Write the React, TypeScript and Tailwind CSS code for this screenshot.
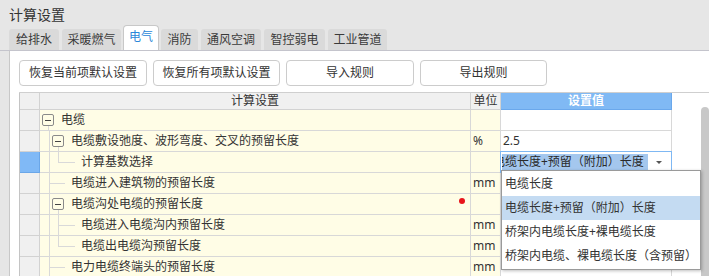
import React from "react";

type Row = {
  text: string;
  indent: number; // text offset from cell start
  unit?: string;
  value?: string;
  box?: number; // left of expander box
  lines: { l: number; t: number; w?: number; h?: number; b?: boolean }[];
  selected?: boolean;
  combo?: boolean;
  dot?: boolean;
};

const V = (l: number) => ({ l, t: 0, h: 21 });
const Vtop = (l: number) => ({ l, t: 0, h: 10 });
const Vbot = (l: number) => ({ l, t: 16, h: 5 });
const H = (l: number, w: number) => ({ l, t: 10, w });

const rows: Row[] = [
  { text: "电缆", indent: 21, box: 2, lines: [Vbot(8)] },
  {
    text: "电缆敷设弛度、波形弯度、交叉的预留长度",
    indent: 31,
    box: 12,
    unit: "%",
    value: "2.5",
    lines: [V(9), Vbot(18)],
  },
  {
    text: "计算基数选择",
    indent: 41,
    selected: true,
    combo: true,
    lines: [V(9), Vtop(18), H(18, 17)],
  },
  { text: "电缆进入建筑物的预留长度", indent: 31, unit: "mm", lines: [V(9), H(9, 16)] },
  { text: "电缆沟处电缆的预留长度", indent: 31, box: 12, dot: true, lines: [V(9), Vbot(18)] },
  { text: "电缆进入电缆沟内预留长度", indent: 41, unit: "mm", lines: [V(9), V(18), H(18, 17)] },
  { text: "电缆出电缆沟预留长度", indent: 41, unit: "mm", lines: [V(9), Vtop(18), H(18, 17)] },
  { text: "电力电缆终端头的预留长度", indent: 31, unit: "mm", lines: [V(9), H(9, 16)] },
];

const tabs = [
  { t: "给排水", w: 50 },
  { t: "采暖燃气", w: 59 },
  { t: "电气", w: 34, active: true },
  { t: "消防", w: 37 },
  { t: "通风空调", w: 60 },
  { t: "智控弱电", w: 61 },
  { t: "工业管道", w: 59 },
];

const buttons = [
  { t: "恢复当前项默认设置", w: 128 },
  { t: "恢复所有项默认设置", w: 127 },
  { t: "导入规则", w: 128 },
  { t: "导出规则", w: 127 },
];

const options = [
  "电缆长度",
  "电缆长度+预留（附加）长度",
  "桥架内电缆长度+裸电缆长度",
  "桥架内电缆、裸电缆长度（含预留）",
];

export default function App() {
  return (
    <div className="relative w-[709px] h-[276px] overflow-hidden bg-[#e6e6e6] text-[12px] text-[#333] font-['Noto_Sans','Noto_Sans_CJK_SC',sans-serif] flex flex-col">
      <div className="h-[28px] shrink-0 pl-[9px] pt-[6px] text-[14px] leading-[18px] text-[#333]">
        计算设置
      </div>
      <div className="h-[23px] shrink-0 flex items-end gap-[3px] pl-[9px] border-b border-[#c4c4cc]">
        {tabs.map((tab) =>
          tab.active ? (
            <div
              key={tab.t}
              style={{ width: tab.w + 2 }}
              className="h-[25px] -mx-[1px] bg-white border border-b-0 border-[#c8c8c8] rounded-t-[4px] flex items-center justify-center pb-[2px] text-[#2b87d9]"
            >
              {tab.t}
            </div>
          ) : (
            <div
              key={tab.t}
              style={{ width: tab.w }}
              className="h-[21px] bg-[#dadada] rounded-t-[3px] flex items-center justify-center text-[#3a3a3a]"
            >
              {tab.t}
            </div>
          )
        )}
      </div>
      <div className="flex-1 ml-[9px] bg-white border-l border-[#c8c8c8] pl-[9px] flex flex-col">
        <div className="mt-[9px] flex gap-[6px] shrink-0">
          {buttons.map((b) => (
            <div
              key={b.t}
              style={{ width: b.w }}
              className="h-[26px] border border-[#cccccc] rounded-[4px] bg-white flex items-center justify-center text-[#333]"
            >
              {b.t}
            </div>
          ))}
        </div>
        <div className="mt-[6px] flex border-t border-[#cfcfcf] flex-1">
          <div className="w-[653px] shrink-0 border-l border-[#c4c4c4]">
            {/* header */}
            <div className="flex h-[17px]">
              <div className="w-[20px] bg-[#f0f0f0] border-r border-b border-[#d2d2d2]" />
              <div className="w-[431px] bg-[#f0f0f0] border-r border-b border-[#d2d2d2] flex items-center justify-center text-[#333]">
                计算设置
              </div>
              <div className="w-[30px] bg-[#f0f0f0] border-r border-b border-[#d2d2d2] flex items-center justify-center text-[#333]">
                单位
              </div>
              <div className="w-[171px] bg-[#80b9f4] border-r border-b border-[#6aa8ec] flex items-center justify-center text-white font-bold">
                设置值
              </div>
            </div>
            {rows.map((r, i) => (
              <div key={i} className="flex h-[21px]">
                <div
                  className={
                    r.selected
                      ? "w-[20px] bg-[#80b9f6] border-r border-b border-[#6aa6e8]"
                      : "w-[20px] bg-[#f0f0f0] border-r border-b border-[#d2d2d2]"
                  }
                />
                <div className="relative w-[431px] bg-[#fffde6] border-r border-b border-[#d8d8d8] flex items-center">
                  {r.lines.map((ln, j) =>
                    ln.w ? (
                      <span
                        key={j}
                        style={{ left: ln.l, top: ln.t, width: ln.w }}
                        className="absolute h-[1px] bg-[#d9d9d9]"
                      />
                    ) : (
                      <span
                        key={j}
                        style={{ left: ln.l, top: ln.t, height: ln.h }}
                        className="absolute w-[1px] bg-[#d9d9d9]"
                      />
                    )
                  )}
                  {r.box !== undefined && (
                    <span
                      style={{ left: r.box }}
                      className="absolute top-[4px] w-[12px] h-[12px] border border-[#8a8a8a] rounded-[2px] bg-[#fffde6] flex items-center justify-center"
                    >
                      <span className="w-[6px] h-[1px] bg-[#444]" />
                    </span>
                  )}
                  <span style={{ paddingLeft: r.indent }} className="whitespace-nowrap text-[#333]">
                    {r.text}
                  </span>
                  {r.dot && (
                    <span className="absolute left-[419px] top-[4px] w-[6px] h-[6px] rounded-full bg-[#e8141b]" />
                  )}
                </div>
                <div className="w-[30px] bg-[#fffde6] border-r border-b border-[#d8d8d8] flex items-center pl-[2px] text-[#333]">
                  {r.unit}
                </div>
                <div className="relative w-[171px] bg-white border-r border-b border-[#d8d8d8] flex items-center pl-[2px] text-[#333]">
                  {r.value}
                  {r.combo && (
                    <div className="absolute -top-[1px] -left-[1px] w-[172px] h-[22px] border border-[#7fb8f3] bg-white flex items-center pl-[1px]">
                      <div className="w-[146px] h-[16px] overflow-hidden bg-[#a4c7ee] flex items-center">
                        <span className="-ml-[9px] whitespace-nowrap text-[#2a2a2a]">
                          电缆长度+预留（附加）长度
                        </span>
                      </div>
                      <span className="ml-[8px] w-0 h-0 border-l-[3px] border-r-[3px] border-t-[3px] border-l-transparent border-r-transparent border-t-[#555]" />
                    </div>
                  )}
                </div>
              </div>
            ))}
          </div>
          <div className="flex-1" />
          <div className="w-[8px] shrink-0 pt-[14px]">
            <div className="w-[8px] h-[200px] rounded-[4px] bg-[#c8c8c8]" />
          </div>
        </div>
      </div>

      {/* dropdown list */}
      <div className="absolute left-[501px] top-[170px] w-[200px] bg-white border border-[#9a9a9a] shadow-[1px_1px_3px_rgba(0,0,0,0.25)] pt-[1px] pb-[1px]">
        {options.map((o, i) => (
          <div
            key={o}
            className={
              i === 1
                ? "h-[24px] flex items-center pl-[3px] bg-[#c4dbf2] text-[#333] whitespace-nowrap"
                : "h-[24px] flex items-center pl-[3px] text-[#333] whitespace-nowrap"
            }
          >
            {o}
          </div>
        ))}
      </div>
    </div>
  );
}
